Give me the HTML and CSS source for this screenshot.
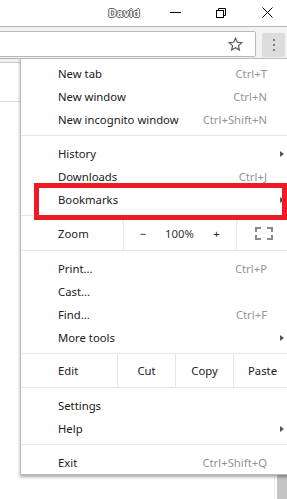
FILE: index.html
```html
<!DOCTYPE html>
<html lang="en">
<head>
    <meta charset="UTF-8">
    <meta name="viewport" content="width=device-width, initial-scale=1.0">
    <title>Chrome menu - Bookmarks</title>
    <link rel="stylesheet" href="styles.css">
</head>
<body>
    <div class="titlebar">
        <span class="profile">David</span>
        <div class="winbtns">
            <span class="winbtn">
                <svg width="11" height="11" viewBox="0 0 11 11"><path d="M0 5.5H11" stroke="#000" stroke-width="1"/></svg>
            </span>
            <span class="winbtn">
                <svg width="10" height="10" viewBox="0 0 10 10" fill="none" stroke="#000" stroke-width="1">
                    <rect x="0.5" y="2.5" width="7" height="7"/>
                    <path d="M2.5 2.5V0.5H9.5V7.5H7.5"/>
                </svg>
            </span>
            <span class="winbtn">
                <svg width="11" height="11" viewBox="0 0 11 11" stroke="#000" stroke-width="1"><path d="M0.5 0.5L10.5 10.5M10.5 0.5L0.5 10.5"/></svg>
            </span>
        </div>
    </div>

    <div class="toolbar">
        <div class="omnibox">
            <svg class="star" width="15" height="15" viewBox="0 0 15 15">
                <path d="M7.5 1.2L9.3 5.3L13.8 5.7L10.4 8.6L11.4 13L7.5 10.7L3.6 13L4.6 8.6L1.2 5.7L5.7 5.3Z" fill="none" stroke="#5a5a5a" stroke-width="1.2" stroke-linejoin="miter"/>
            </svg>
        </div>
        <div class="menubtn">
            <span class="dot"></span>
            <span class="dot"></span>
            <span class="dot"></span>
        </div>
    </div>

    <div class="page">
        <div class="page-strip"></div>
        <div class="page-body">
            <div class="page-main">
                <div class="page-row"></div>
            </div>
            <div class="scrolltrack"><div class="scrollthumb"></div></div>
        </div>

        <div class="menu">
            <div class="menu-section first">
                <div class="item"><span class="label">New tab</span><span class="key">Ctrl+T</span><span class="sub"></span></div>
                <div class="item"><span class="label">New window</span><span class="key">Ctrl+N</span><span class="sub"></span></div>
                <div class="item"><span class="label">New incognito window</span><span class="key">Ctrl+Shift+N</span><span class="sub"></span></div>
            </div>
            <div class="menu-section">
                <div class="item"><span class="label">History</span><span class="sub"><i class="arrow"></i></span></div>
                <div class="item"><span class="label">Downloads</span><span class="key">Ctrl+J</span><span class="sub"></span></div>
                <div class="item"><span class="label">Bookmarks</span><span class="sub"><i class="arrow"></i></span></div>
            </div>
            <div class="control-row zoom-row">
                <span class="ctl-label">Zoom</span>
                <div class="zoom-ctl">
                    <span class="zbtn minus">&minus;</span>
                    <span class="zval">100%</span>
                    <span class="zbtn plus">+</span>
                </div>
                <div class="fullscreen">
                    <svg width="18" height="13" viewBox="0 0 18 13" fill="none" stroke="#8a8a8a" stroke-width="2">
                        <path d="M1 5V1H6M12 1H17V5M17 8V12H12M6 12H1V8"/>
                    </svg>
                </div>
            </div>
            <div class="menu-section">
                <div class="item"><span class="label">Print...</span><span class="key">Ctrl+P</span><span class="sub"></span></div>
                <div class="item"><span class="label">Cast...</span><span class="sub"></span></div>
                <div class="item"><span class="label">Find...</span><span class="key">Ctrl+F</span><span class="sub"></span></div>
                <div class="item"><span class="label">More tools</span><span class="sub"><i class="arrow"></i></span></div>
            </div>
            <div class="control-row edit-row">
                <span class="ctl-label">Edit</span>
                <span class="ebtn">Cut</span>
                <span class="ebtn">Copy</span>
                <span class="ebtn">Paste</span>
            </div>
            <div class="menu-section">
                <div class="item"><span class="label">Settings</span><span class="sub"></span></div>
                <div class="item"><span class="label">Help</span><span class="sub"><i class="arrow"></i></span></div>
            </div>
            <div class="menu-section last">
                <div class="item"><span class="label">Exit</span><span class="key">Ctrl+Shift+Q</span><span class="sub"></span></div>
            </div>
        </div>

        <div class="callout"></div>
    </div>
</body>
</html>
```

FILE: styles.css
```css
html, body { margin: 0; padding: 0; }
body { width: 287px; height: 499px; overflow: hidden; background: #fff; font-family: "Noto Sans", "Open Sans", sans-serif; color: #202020; }

/* window title bar */
.titlebar { height: 26px; border-bottom: 1px solid #b4b4b4; background: #fff; display: flex; align-items: center; justify-content: flex-end; margin-right: -3px; }
.profile { font-family: "Liberation Sans", Arial, sans-serif; font-weight: bold; font-size: 11px; color: #fff; margin-right: 12px; margin-top: -1px;
    text-shadow: 1px 0 0 #5a5a5a, -1px 0 0 #5a5a5a, 0 1px 0 #5a5a5a, 0 -1px 0 #5a5a5a; letter-spacing: 0.3px; }
.winbtns { display: flex; }
.winbtn { width: 46px; height: 26px; display: flex; align-items: center; justify-content: center; }
.winbtn svg { display: block; margin-top: -1px; }

/* toolbar */
.toolbar { height: 31px; background: #f2f2f2; border-bottom: 1px solid #b4b4b4; display: flex; align-items: flex-start; }
.omnibox { margin: 4px 0 0 -4px; width: 258px; height: 24px; background: #fff; border: 1px solid #b9b9b9; border-radius: 2px; display: flex; align-items: center; justify-content: flex-end; }
.star { margin-right: 12px; margin-top: 1px; }
.menubtn { margin: 6px 0 0 6px; width: 23px; height: 24px; background: #dcdcdc; border-radius: 2px; display: flex; flex-direction: column; align-items: center; justify-content: center; gap: 3px; }
.dot { width: 2px; height: 2px; background: #5f5f5f; border-radius: 1px; }

/* page under the menu */
.page { position: relative; height: 440px; }
.page-strip { height: 3px; background: #f2f2f2; border-bottom: 1px solid #c8c8c8; }
.page-body { display: flex; height: 436px; }
.page-main { flex: 1; }
.page-row { height: 38px; border-bottom: 1px solid #dcdcdc; }
.scrolltrack { width: 10px; border-left: 1px solid #ececec; padding-left: 2px; }
.scrollthumb { width: 10px; height: 100%; background: #c4c4c4; }

/* app menu */
.menu { position: absolute; left: 20px; top: -1px; width: 275px; background: #fff; border: 1px solid #bcbcbc; font-size: 11.3px; box-shadow: 0 2px 3px rgba(0, 0, 0, 0.35); }
.menu-section { padding: 6px 0 4px; border-top: 1px solid #e6e6e6; }
.menu-section.first { padding-top: 3px; border-top: none; }
.menu-section.last { padding-bottom: 0; }
.item { height: 23px; display: flex; align-items: center; padding-left: 37px; }
.label { flex: 1; }
.key { color: #949494; }
.sub { width: 29px; height: 23px; display: flex; align-items: center; padding-left: 13px; box-sizing: border-box; }
.arrow { display: block; width: 0; height: 0; border-left: 4px solid #555; border-top: 3.5px solid transparent; border-bottom: 3.5px solid transparent; }

.control-row { display: flex; align-items: stretch; border-top: 1px solid #e6e6e6; }
.zoom-row { height: 34px; }
.edit-row { height: 33px; }
.ctl-label { display: flex; align-items: center; padding-left: 37px; }
.zoom-row .ctl-label { width: 65px; }
.edit-row .ctl-label { width: 59px; }
.zoom-ctl { display: flex; border-left: 1px solid #e6e6e6; border-right: 1px solid #e6e6e6; }
.zbtn, .zval { display: flex; align-items: center; justify-content: center; }
.minus { width: 38px; }
.zval { width: 35px; color: #333; }
.plus { width: 39px; }
.fullscreen { display: flex; align-items: center; padding-left: 18px; }
.fullscreen svg { display: block; }
.ebtn { width: 57px; border-left: 1px solid #e6e6e6; display: flex; align-items: center; justify-content: center; }

/* red annotation around Bookmarks */
.callout { position: absolute; left: 34px; top: 124px; width: 253px; height: 37px; border: 5px solid #ed1c24; box-sizing: border-box; }
```
